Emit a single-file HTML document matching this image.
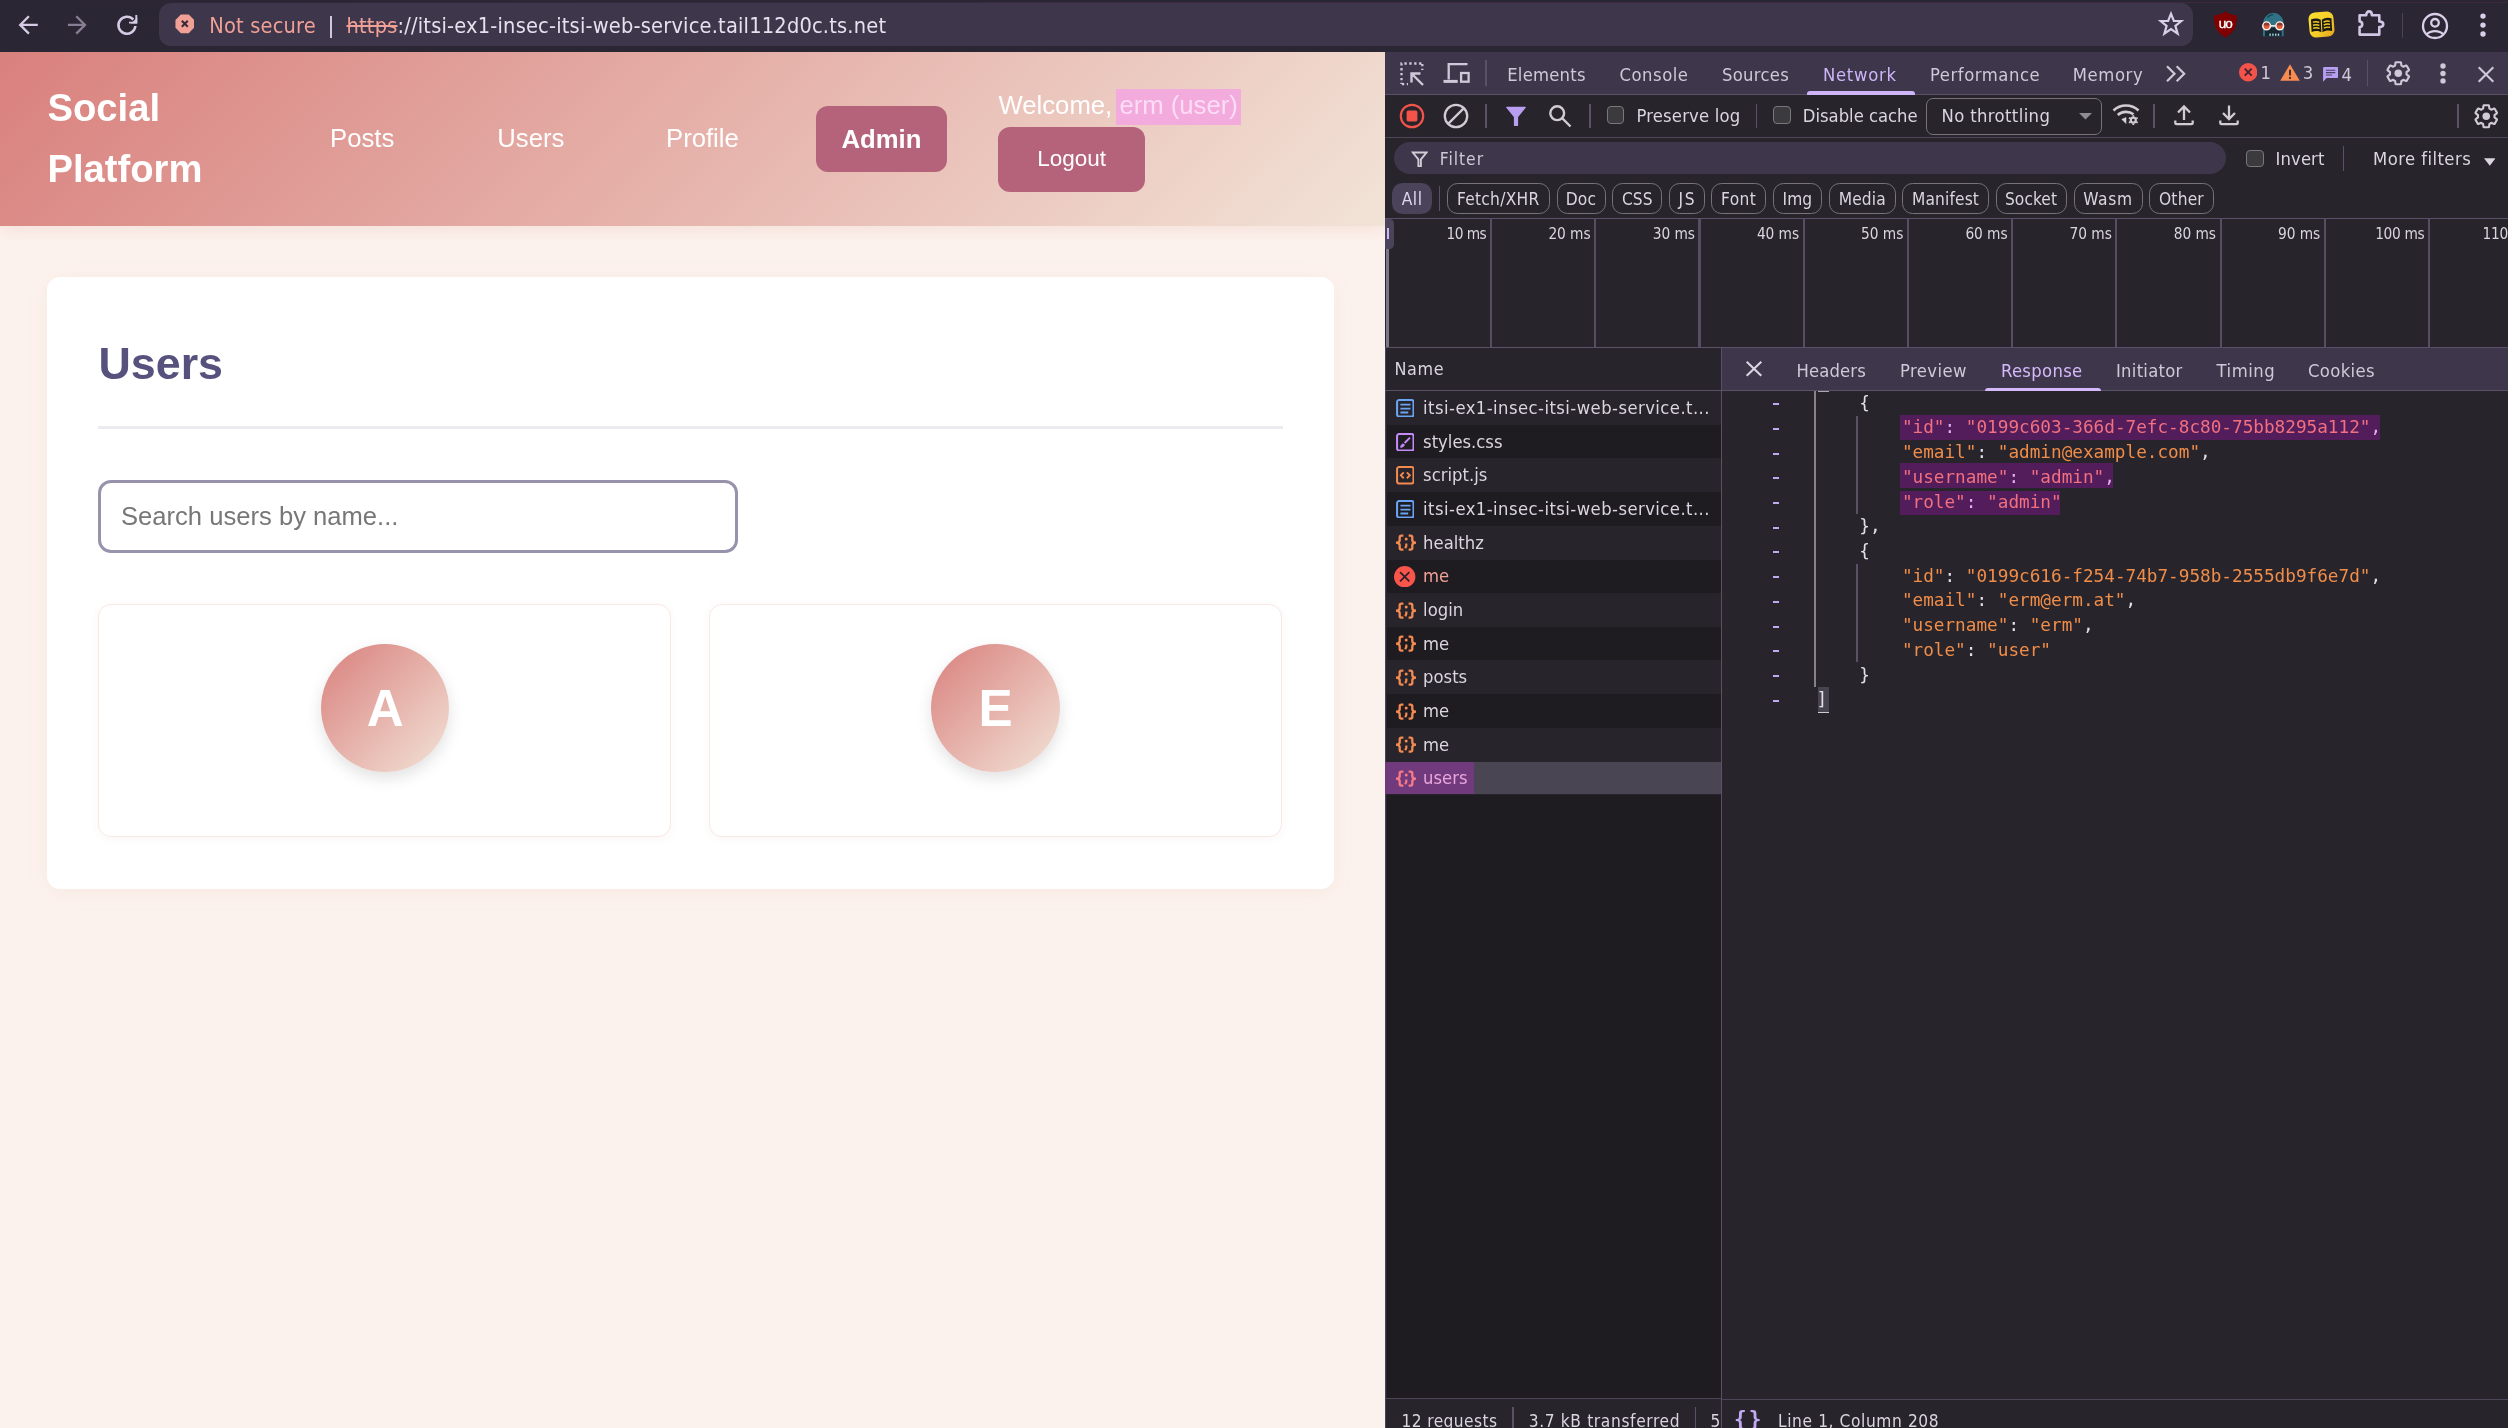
<!DOCTYPE html>
<html lang="en"><head>
<meta charset="utf-8">
<title>Social Platform</title>
<style>
*{box-sizing:border-box;margin:0;padding:0}
html,body{width:2508px;height:1428px;overflow:hidden;background:#27242b}
body{position:relative;font-family:"Liberation Sans",sans-serif}
.abs{position:absolute}
.ui{font-family:"DejaVu Sans Condensed","DejaVu Sans","Liberation Sans",sans-serif}
.mono{font-family:"DejaVu Sans Mono","Liberation Mono",monospace}

/* ---------- browser chrome ---------- */
#chrome{position:absolute;left:0;top:0;width:2508px;height:52px;background:#2b2634}
#omni{position:absolute;left:159px;top:3px;width:2034px;height:43px;background:#3e364b;border-radius:12px}
#chrome .t{position:absolute;white-space:nowrap;font-size:21.6px;line-height:26px;top:13px}

/* ---------- page ---------- */
#page{position:absolute;left:0;top:52px;width:1385px;height:1376px;background:#fcf2ed;overflow:hidden}
#hdr{position:absolute;left:0;top:0;width:1385px;height:174px;background:linear-gradient(135deg,#d9807d 0%,#f2e3d7 100%);box-shadow:0 3px 16px rgba(205,120,105,.17)}
#logo{position:absolute;left:47.5px;top:25px;font-weight:bold;font-size:38.2px;line-height:61px;color:#fff;width:200px}
.nl{position:absolute;top:66px;font-size:25.7px;line-height:40.5px;color:#fff;white-space:nowrap}
.btn{position:absolute;background:#b5637b;border-radius:10px;color:#fff;text-align:center;white-space:nowrap}
#card{position:absolute;left:47px;top:225px;width:1287px;height:612px;background:#fff;border-radius:13px;box-shadow:0 3px 24px rgba(170,90,60,.06)}
#h1{position:absolute;left:51.5px;top:50.5px;font-size:44.8px;line-height:71px;font-weight:bold;color:#57517e}
#hr{position:absolute;left:51px;top:149.3px;width:1185px;height:3px;background:#ececf0}
#search{position:absolute;left:51px;top:203.2px;width:640px;height:72.8px;border:3px solid #9892ab;border-radius:13px;background:#fff}
#search span{position:absolute;left:20px;top:14px;font-size:25.6px;line-height:38px;color:#777;white-space:nowrap}
.uc{position:absolute;top:327px;width:573px;height:233px;border:1.6px solid #f9e9e3;border-radius:13px;background:#fff;box-shadow:0 2px 8px rgba(160,80,60,.05)}
.av{position:absolute;left:221.7px;top:38.7px;width:128.4px;height:128.4px;border-radius:50%;background:linear-gradient(135deg,#d9807d 0%,#f2e3d7 100%);box-shadow:0 6px 16px rgba(0,0,0,.12);color:#fff;font-weight:bold;font-size:51.2px;line-height:130px;text-align:center}

/* ---------- devtools ---------- */
#dt{position:absolute;left:1385px;top:52px;width:1123px;height:1376px;background:#27242b;color:#e3dfe8;font-size:19px;overflow:hidden}
#dt .lb{position:absolute;white-space:nowrap;line-height:24px}
.code{font-size:17.700px;line-height:24.73px;white-space:pre;letter-spacing:0}
#chrome,#page,#dt{will-change:transform}
</style>
</head>
<body>
<div id="chrome">
  <div class="abs" style="left:0;top:2px;width:2508px;height:1px;background:linear-gradient(90deg,rgba(90,50,90,0) 0%,rgba(100,50,95,.3) 45%,rgba(100,50,95,.3) 100%)"></div>
  <svg class="abs" style="left:16px;top:13px" width="24" height="24" viewBox="0 0 24 24" fill="none" stroke="#d5cbe5" stroke-width="2.300" stroke-linejoin="miter"><path d="M21.800 11.900H4.700M12.900 3.200L4.200 11.900L12.900 20.600"></path></svg>
  <svg class="abs" style="left:65px;top:13px" width="24" height="24" viewBox="0 0 24 24" fill="none" stroke="#887e94" stroke-width="2.300" stroke-linejoin="miter"><path d="M2.900 11.900H19.500M11.300 3.200L20 11.900L11.300 20.600"></path></svg>
  <svg class="abs" style="left:115px;top:13px" width="24" height="24" viewBox="0 0 24 24" fill="none" stroke="#d5cbe5"><path d="M20.400 13A8.500 8.500 0 1 1 18.300 6.600" stroke-width="2.500"></path><path d="M21.300 2V9.600H14" stroke-width="1.900"></path><path d="M22.250 4.500V10.550H16Z" fill="#d5cbe5" stroke="none"></path></svg>
  <div id="omni"></div>
  <svg class="abs" style="left:174.600px;top:14.400px" width="19.600" height="19.600" viewBox="0 0 21 21"><path d="M6.300 0.500H14.700L20.500 6.300V14.700L14.700 20.500H6.300L0.500 14.700V6.300Z" fill="#f1a096"></path><path d="M7.300 7.300L13.700 13.700M13.700 7.300L7.300 13.700" stroke="#3a2a36" stroke-width="2.200"></path></svg>
  <div class="t ui" style="left: 209.3px; color: rgb(241, 160, 150); letter-spacing: 0.19px;">Not secure</div>
  <div class="abs" style="left:330px;top:16px;width:2px;height:22px;background:#cfc8da"></div>
  <div class="t ui" style="left: 346.5px; color: rgb(231, 225, 238); letter-spacing: 0.2px;"><span style="color:#f1a096;text-decoration:line-through;text-decoration-thickness:1.5px">https</span>://itsi-ex1-insec-itsi-web-service.tail112d0c.ts.net</div>
  <svg class="abs" style="left:2158px;top:11px" width="26" height="26" viewBox="0 0 26 26" fill="none" stroke="#d9cfe8" stroke-width="2.2" stroke-linejoin="miter"><path d="M13 2.8L15.9 10H23.4L17.4 14.8L19.6 22.6L13 18L6.4 22.6L8.6 14.8L2.6 10H10.1Z"></path></svg>
  <!-- uBlock -->
  <svg class="abs" style="left:2213px;top:11px" width="25" height="27" viewBox="0 0 25 27"><path d="M12.4 0.6C9.5 3 5 4.3 1 4.6C0.800 14 2.500 21 12.400 26.500C22.300 21 24 14 23.800 4.600C19.800 4.300 15.300 3 12.400 0.600Z" fill="#800000"></path><text x="12.300" y="17.100" font-family="Liberation Sans,sans-serif" font-size="13.500" fill="#fff" stroke="#fff" stroke-width="0.350" text-anchor="middle" letter-spacing="-0.900">uo</text></svg>
  <!-- goggles -->
  <svg class="abs" style="left:2260px;top:12px" width="26" height="25" viewBox="0 0 26 25"><path d="M3 24.300V11.200A10.350 10.350 0 0 1 23.700 11.200V24.300Z" fill="#2f7285"></path><path d="M7.500 5.500C9 3.500 11 2.600 13 2.500" stroke="#1d4654" stroke-width="1.400" fill="none"></path><rect x="5" y="15.500" width="16.700" height="8.800" fill="#172630"></rect><rect x="9.400" y="21.600" width="1.400" height="2.200" fill="#a8dbe6"></rect><rect x="12.200" y="21.600" width="1.400" height="2.200" fill="#a8dbe6"></rect><rect x="15" y="21.600" width="1.400" height="2.200" fill="#a8dbe6"></rect><rect x="17.800" y="21.600" width="1.400" height="2.200" fill="#a8dbe6"></rect><circle cx="6.600" cy="13.900" r="3.800" fill="#e2593c" stroke="#fdf1ea" stroke-width="1.600"></circle><circle cx="19.700" cy="13.900" r="3.800" fill="#e2593c" stroke="#fdf1ea" stroke-width="1.600"></circle><path d="M3.600 13.400A3 3 0 0 1 9.600 13.400Z" fill="#8a3a30"></path><path d="M16.700 13.400A3 3 0 0 1 22.700 13.400Z" fill="#8a3a30"></path><rect x="10.800" y="13.100" width="4.700" height="1.500" fill="#fdf1ea"></rect></svg>
  <!-- book -->
  <svg class="abs" style="left:2308px;top:11px" width="27" height="27" viewBox="0 0 27 27"><defs><linearGradient id="bk" x1="0" y1="0" x2="1" y2="1"><stop offset="0" stop-color="#f9e034"></stop><stop offset="0.600" stop-color="#f4cc28"></stop><stop offset="1" stop-color="#e3a01a"></stop></linearGradient></defs><rect x="1" y="1" width="25" height="25" rx="6.500" fill="url(#bk)" transform="rotate(-5 13.500 13.500)"></rect><g transform="rotate(-3 13.500 13.500) translate(13.500 14) scale(1.080) translate(-13.500 -14)"><path d="M4 8.300C7 7.100 10.500 7.400 13 9.200V20.800C10.500 19.100 7 18.900 4 20Z" fill="#1c1a14"></path><path d="M23 8.300C20 7.100 16.500 7.400 14 9.200V20.800C16.500 19.100 20 18.900 23 20Z" fill="#1c1a14"></path><path d="M5.600 11C7.600 10.400 9.700 10.600 11.500 11.500M5.600 13.800C7.600 13.200 9.700 13.400 11.500 14.300M5.600 16.600C7.600 16 9.700 16.200 11.500 17.100M21.400 11C19.400 10.400 17.300 10.600 15.500 11.500M21.400 13.800C19.400 13.200 17.300 13.400 15.500 14.300M21.400 16.600C19.400 16 17.300 16.200 15.500 17.100" stroke="#f4cc28" stroke-width="1.300" fill="none"></path></g></svg>
  <!-- puzzle -->
  <svg class="abs" style="left:2356px;top:9px" width="30" height="29" viewBox="0 0 30 29" fill="none" stroke="#d1c6e3" stroke-width="2.600" stroke-linejoin="round"><path d="M3.600 6.300H10.200C10.200 1 15.900 1 15.900 6.300H23.300V12.500C28.600 12.500 28.600 18.100 23.300 18.100V25.600H3.600V18.100C7.100 18.100 7.100 12.500 3.600 12.500Z"></path></svg>
  <div class="abs" style="left:2402px;top:13px;width:1px;height:25px;background:#4b4259"></div>
  <!-- profile -->
  <svg class="abs" style="left:2421px;top:12px" width="28" height="28" viewBox="0 0 28 28" fill="none" stroke="#d9cfe8" stroke-width="2.3"><circle cx="14" cy="14" r="12"></circle><circle cx="14" cy="10.800" r="3.800"></circle><path d="M5.800 22.300C9.800 18.100 18.200 18.100 22.200 22.300"></path></svg>
  <svg class="abs" style="left:2479px;top:12px" width="8" height="26" viewBox="0 0 8 26" fill="#d9cfe8"><circle cx="4" cy="4.100" r="2.700"></circle><circle cx="4" cy="13.100" r="2.700"></circle><circle cx="4" cy="22" r="2.700"></circle></svg>
</div>
<div id="page">
  <div id="hdr">
    <div id="logo"><span style="position:absolute;left:0;top:0">Social</span> <span style="position:absolute;left:0;top:61px">Platform</span></div>
    <div class="nl" style="left:330px">Posts</div>
    <div class="nl" style="left:497.3px">Users</div>
    <div class="nl" style="left:666px">Profile</div>
    <div class="btn" style="left:816px;top:54px;width:131px;height:66px;font-size:25.7px;line-height:66px;font-weight:bold;border-radius:12px">Admin</div>
    <div class="abs" style="left:1116px;top:37.2px;width:124.8px;height:35.6px;background:#f2abdc"></div>
    <div class="nl" style="left:998.5px;top:33px">Welcome, <span style="color:#fcdcf6">erm (user)</span></div>
    <div class="btn" style="left:998px;top:75.4px;width:147.2px;height:64.7px;font-size:22.5px;line-height:63.5px;border-radius:12px">Logout</div>
  </div>
  <div id="card">
    <div id="h1">Users</div>
    <div id="hr"></div>
    <div id="search"><span>Search users by name...</span></div>
    <div class="uc" style="left:51.4px"><div class="av">A</div></div>
    <div class="uc" style="left:661.6px"><div class="av">E</div></div>
  </div>
</div>
<div id="dt" class="ui">
<div class="abs" style="left:0px;top:0px;width:1123px;height:42.3px;background:#3e364b;"></div>
<div class="abs" style="left:0px;top:42.2px;width:1123px;height:1.2px;background:#5a5168;"></div>
<svg class="abs" style="left:14px;top:8.5px" width="26" height="26" viewBox="0 0 26 26" fill="none" stroke="#cfc8d7"><path d="M2.5 23V2.5H23.5" stroke-width="2.3" stroke-dasharray="2.3 2.6" stroke-dashoffset="1.1"></path><path d="M2.5 23.2H9" stroke-width="2.3" stroke-dasharray="2.3 2.6" stroke-dashoffset="-0.4"></path><path d="M23.3 2.5V9" stroke-width="2.3" stroke-dasharray="2.3 2.6" stroke-dashoffset="-0.4"></path><path d="M24 24L12.5 12.5M12.5 21.5V12.5H21.5" stroke-width="2.4"></path></svg>
<svg class="abs" style="left:57.5px;top:10px" width="29" height="22" viewBox="0 0 29 22" fill="none" stroke="#cfc8d7" stroke-width="2.3"><path d="M5.7 17.5V2.2H24.5"></path><path d="M0.5 19.4H14.7" stroke-width="3"></path><rect x="18.1" y="11" width="7.5" height="8.7"></rect></svg>
<div class="abs" style="left:99.85px;top:8.3px;width:1.7px;height:25.9px;background:#5a5168;"></div>
<div class="lb" style="left: 122.2px; top: 10.6px; color: rgb(207, 200, 215); font-size: 18.3px; letter-spacing: 0.24px;">Elements</div>
<div class="lb" style="left: 234.4px; top: 10.6px; color: rgb(207, 200, 215); font-size: 18.3px; letter-spacing: 0.55px;">Console</div>
<div class="lb" style="left: 337px; top: 10.6px; color: rgb(207, 200, 215); font-size: 18.3px; letter-spacing: 0.3px;">Sources</div>
<div class="lb" style="left: 438px; top: 10.6px; color: rgb(205, 181, 247); font-size: 18.3px; letter-spacing: 0.71px;">Network</div>
<div class="lb" style="left: 545px; top: 10.6px; color: rgb(207, 200, 215); font-size: 18.3px; letter-spacing: 0.56px;">Performance</div>
<div class="lb" style="left: 687.7px; top: 10.6px; color: rgb(207, 200, 215); font-size: 18.3px; letter-spacing: 0.62px;">Memory</div>
<div class="abs" style="left:421.5px;top:39px;width:108px;height:3.6px;background:#cdb5f7;border-radius:3px 3px 0 0"></div>
<svg class="abs" style="left:780px;top:12px" width="22" height="19" viewBox="0 0 22 19" fill="none" stroke="#cfc8d7" stroke-width="2.2"><path d="M2 2.2L9.5 9.7L2 17.2M11.7 2.2L19.2 9.7L11.7 17.2"></path></svg>
<svg class="abs" style="left:854px;top:11.2px" width="18.4" height="18.4" viewBox="0 0 18 18"><circle cx="9" cy="9" r="9" fill="#f4534a"></circle><path d="M5.6 5.6L12.4 12.4M12.4 5.6L5.6 12.4" stroke="#3c2233" stroke-width="1.7"></path></svg>
<div class="lb" style="left:875.4px;top:8.5px;color:#cfc8d7;font-size:18.3px;">1</div>
<svg class="abs" style="left:894.7px;top:11.5px" width="20" height="17" viewBox="0 0 20 17"><path d="M10 0.3L19.8 16.8H0.2Z" fill="#f88b50"></path><path d="M10 5.8V11.4" stroke="#3e2c33" stroke-width="1.9"></path><circle cx="10" cy="13.9" r="1.15" fill="#3e2c33"></circle></svg>
<div class="lb" style="left:917.8px;top:8.5px;color:#cfc8d7;font-size:18.3px;">3</div>
<svg class="abs" style="left:938px;top:14.7px" width="15.2" height="15" viewBox="0 0 15 15"><path d="M1.2 0H13.8Q15 0 15 1.2V9.8Q15 11 13.8 11H3.5L0 14.7V1.2Q0 0 1.2 0Z" fill="#b99ff2"></path><path d="M2.8 3.2H12.2M2.8 5.6H12.2M2.8 8H9" stroke="#4a3f63" stroke-width="1.1"></path></svg>
<div class="lb" style="left:956.4px;top:11.1px;color:#cfc8d7;font-size:18.3px;">4</div>
<div class="abs" style="left:981.75px;top:8.1px;width:1.7px;height:25.7px;background:#5a5168;"></div>
<svg class="abs" style="left:999.75px;top:7.85px" width="26.5" height="26.5" viewBox="0 0 24 24"><path d="M19.43 12.98c.040-.320.07-.640.07-.980s-.030-.660-.070-.980l2.11-1.65c.190-.150.24-.420.12-.640l-2-3.46c-.120-.220-.390-.300-.610-.220l-2.49 1c-.520-.400-1.08-.730-1.69-.980l-.380-2.65C14.46 2.18 14.25 2 14 2h-4c-.250 0-.460.18-.490.42l-.380 2.65c-.610.25-1.17.590-1.69.980l-2.49-1c-.230-.090-.490 0-.610.22l-2 3.46c-.130.22-.070.49.120.64l2.11 1.65c-.040.32-.070.65-.070.98s.030.66.070.98l-2.11 1.65c-.190.15-.240.42-.120.64l2 3.46c.120.22.390.3.610.22l2.49-1c.520.4 1.08.730 1.69.980l.380 2.65c.030.24.240.42.490.42h4c.250 0 .460-.180.49-.420l.380-2.65c.610-.250 1.17-.590 1.69-.980l2.49 1c.230.09.490 0 .610-.220l2-3.46c.120-.220.07-.490-.120-.640l-2.11-1.65z" fill="none" stroke="#cfc8d7" stroke-width="1.9" stroke-linejoin="round"></path><circle cx="12" cy="12" r="3.4" fill="#cfc8d7"></circle></svg>
<svg class="abs" style="left:1054.8px;top:10.7px" width="6" height="21" viewBox="0 0 6 21" fill="#cfc8d7"><circle cx="3" cy="3" r="2.7"></circle><circle cx="3" cy="10.5" r="2.7"></circle><circle cx="3" cy="17.9" r="2.7"></circle></svg>
<svg class="abs" style="left:1092px;top:13.5px" width="18" height="17" viewBox="0 0 18 17" fill="none" stroke="#cfc8d7" stroke-width="2.1"><path d="M1.7 1.2L16.3 15.8M16.3 1.2L1.7 15.8"></path></svg>
<div class="abs" style="left:0px;top:84.5px;width:1123px;height:1.2px;background:#4d4659;"></div>
<svg class="abs" style="left:14px;top:51.2px" width="26" height="26" viewBox="0 0 26 26"><circle cx="13" cy="13" r="11.2" fill="none" stroke="#f4534a" stroke-width="2.2"></circle><rect x="7.6" y="7.6" width="10.8" height="10.8" rx="1.6" fill="#f4534a"></rect></svg>
<svg class="abs" style="left:58px;top:51.2px" width="26" height="26" viewBox="0 0 26 26" fill="none" stroke="#d0cbd5" stroke-width="2.3"><circle cx="13" cy="13" r="11.2"></circle><path d="M20.9 5.1L5.1 20.9"></path></svg>
<div class="abs" style="left:100.15px;top:51.8px;width:1.7px;height:24.7px;background:#5a5168;"></div>
<svg class="abs" style="left:120px;top:54px" width="22" height="21" viewBox="0 0 22 21"><path d="M1.8 1.3H20.2L12.5 10.8V19.3H9.5V10.8Z" fill="#b99ff2" stroke="#b99ff2" stroke-width="1.2" stroke-linejoin="round"></path></svg>
<svg class="abs" style="left:163px;top:52.2px" width="24" height="24" viewBox="0 0 24 24" fill="none" stroke="#d0cbd5" stroke-width="2.4"><circle cx="9.2" cy="9.2" r="6.9"></circle><path d="M14 14L22.5 22.5"></path></svg>
<div class="abs" style="left:203.95px;top:51.8px;width:1.7px;height:24.7px;background:#5a5168;"></div>
<div class="abs" style="left:221.8px;top:54.2px;width:17.6px;height:17.6px;border:1.7px solid #7a767e;border-radius:4px;background:#3b3a3d"></div>
<div class="lb" style="left: 251.5px; top: 51.5px; color: rgb(218, 213, 224); font-size: 18.3px; letter-spacing: 0.18px;">Preserve log</div>
<div class="abs" style="left:370.75px;top:51.8px;width:1.7px;height:24.7px;background:#5a5168;"></div>
<div class="abs" style="left:388px;top:54.2px;width:17.6px;height:17.6px;border:1.7px solid #7a767e;border-radius:4px;background:#3b3a3d"></div>
<div class="lb" style="left: 417.8px; top: 51.5px; color: rgb(218, 213, 224); font-size: 18.3px; letter-spacing: -0.01px;">Disable cache</div>
<div class="abs" style="left:541px;top:45.5px;width:175.8px;height:37.4px;border:1.4px solid #77727d;border-radius:7px"></div>
<div class="lb" style="left: 556.5px; top: 51.5px; color: rgb(218, 213, 224); font-size: 18.3px; letter-spacing: 0.38px;">No throttling</div>
<svg class="abs" style="left:693.5px;top:61.3px" width="13" height="6.5" viewBox="0 0 13 6.5"><path d="M0 0H13L6.5 6.5Z" fill="#908c93"></path></svg>
<svg class="abs" style="left:726.5px;top:50.2px" width="28" height="24" viewBox="0 0 28 24" fill="none" stroke="#d0cbd5" stroke-width="2.6"><path d="M1.5 8.5C8.5 1.8 19.5 1.8 26.5 8.5"></path><path d="M5.8 13C10 9 17 8.8 21.5 12.3"></path><path d="M9.8 17.3L14 21.5V15.5Z" fill="#dad5e0" stroke-width="0.6"></path><circle cx="21.3" cy="18.2" r="2.5" stroke-width="2.2"></circle><path d="M21.3 13.3V14.8M21.3 21.6V23.1M17 15.7L18.3 16.5M24.3 19.9L25.6 20.7M17 20.7L18.3 19.9M24.3 16.5L25.6 15.7" stroke-width="1.9"></path></svg>
<div class="abs" style="left:768.15px;top:51.8px;width:1.7px;height:24.7px;background:#5a5168;"></div>
<svg class="abs" style="left:788px;top:52px" width="22" height="22" viewBox="0 0 22 22" fill="none" stroke="#d0cbd5" stroke-width="2.3"><path d="M11 16V2.8M5 8.5L11 2.5L17 8.5"></path><path d="M2.3 16.5V19Q2.3 20.2 3.5 20.2H18.5Q19.7 20.2 19.7 19V16.5"></path></svg>
<svg class="abs" style="left:833px;top:52px" width="22" height="22" viewBox="0 0 22 22" fill="none" stroke="#d0cbd5" stroke-width="2.3"><path d="M11 1.5V14.5M5 9L11 15L17 9"></path><path d="M2.3 16.5V19Q2.3 20.2 3.5 20.2H18.5Q19.7 20.2 19.7 19V16.5"></path></svg>
<div class="abs" style="left:1072.15px;top:51.8px;width:1.7px;height:24.7px;background:#5a5168;"></div>
<svg class="abs" style="left:1087.75px;top:50.85px" width="26.5" height="26.5" viewBox="0 0 24 24"><path d="M19.43 12.98c.040-.320.07-.640.07-.980s-.030-.660-.070-.980l2.11-1.65c.190-.150.24-.420.12-.640l-2-3.46c-.120-.220-.390-.300-.610-.220l-2.49 1c-.520-.400-1.08-.730-1.69-.980l-.380-2.65C14.46 2.18 14.25 2 14 2h-4c-.250 0-.460.18-.490.42l-.380 2.65c-.610.25-1.17.590-1.69.980l-2.49-1c-.230-.090-.490 0-.610.22l-2 3.46c-.130.22-.070.49.120.64l2.11 1.65c-.040.32-.070.65-.070.98s.030.66.070.98l-2.11 1.65c-.190.15-.240.42-.120.64l2 3.46c.120.22.390.3.610.22l2.49-1c.520.4 1.08.730 1.69.980l.380 2.65c.030.24.240.42.490.42h4c.250 0 .460-.180.49-.420l.380-2.65c.610-.250 1.17-.590 1.69-.980l2.49 1c.230.09.490 0 .610-.220l2-3.46c.120-.220.07-.490-.120-.640l-2.11-1.65z" fill="none" stroke="#d0cbd5" stroke-width="1.9" stroke-linejoin="round"></path><circle cx="12" cy="12" r="3.4" fill="#d0cbd5"></circle></svg>
<div class="abs" style="left:9px;top:89.9px;width:832px;height:32px;background:#3e364b;border-radius:16px"></div>
<svg class="abs" style="left:25.7px;top:98.7px" width="17.3" height="16" viewBox="0 0 17.3 16" fill="none" stroke="#d0cbd5" stroke-width="1.9"><path d="M1.8 1.5H15.5L9.9 8.3V15.5H7.4V8.3Z" stroke-linejoin="miter"></path></svg>
<div class="lb" style="left: 54.8px; top: 95.2px; color: rgb(207, 200, 215); font-size: 17.3px; letter-spacing: 0.97px;">Filter</div>
<div class="abs" style="left:861.4px;top:97.7px;width:17.6px;height:17.6px;border:1.7px solid #7a767e;border-radius:4px;background:#3b3a3d"></div>
<div class="lb" style="left: 890.6px; top: 94.5px; color: rgb(218, 213, 224); font-size: 18.3px; letter-spacing: 0.1px;">Invert</div>
<div class="abs" style="left:957.55px;top:94.4px;width:1.5px;height:24.6px;background:#5a5168;"></div>
<div class="lb" style="left: 988px; top: 94.5px; color: rgb(218, 213, 224); font-size: 18.3px; letter-spacing: 0.45px;">More filters</div>
<svg class="abs" style="left:1098.7px;top:105.6px" width="11.6" height="8" viewBox="0 0 12 8"><path d="M0 0H12L6 8Z" fill="#dad5e0"></path></svg>
<div class="abs" style="left:6.9px;top:131.2px;width:39.9px;height:30.8px;background:#4b4359;border-radius:10.5px"></div>
<div class="lb" style="left: 16.8px; top: 135.2px; color: rgb(224, 212, 240); font-size: 17.2px; letter-spacing: 0.49px;">All</div>
<div class="abs" style="left:61.8px;top:131.2px;width:103.2px;height:30.8px;border-radius:10.5px;border:1.3px solid #77727d"></div>
<div class="lb" style="left: 72px; top: 135.2px; color: rgb(218, 213, 224); font-size: 17.2px; letter-spacing: 0.27px;">Fetch/XHR</div>
<div class="abs" style="left:171.5px;top:131.2px;width:49px;height:30.8px;border-radius:10.5px;border:1.3px solid #77727d"></div>
<div class="lb" style="left: 180.8px; top: 135.2px; color: rgb(218, 213, 224); font-size: 17.2px; letter-spacing: 0.13px;">Doc</div>
<div class="abs" style="left:227px;top:131.2px;width:49.5px;height:30.8px;border-radius:10.5px;border:1.3px solid #77727d"></div>
<div class="lb" style="left: 237px; top: 135.2px; color: rgb(218, 213, 224); font-size: 17.2px; letter-spacing: 0.06px;">CSS</div>
<div class="abs" style="left:284px;top:131.2px;width:36px;height:30.8px;border-radius:10.5px;border:1.3px solid #77727d"></div>
<div class="lb" style="left: 293.5px; top: 135.2px; color: rgb(218, 213, 224); font-size: 17.2px; letter-spacing: 1.74px;">JS</div>
<div class="abs" style="left:326px;top:131.2px;width:54.5px;height:30.8px;border-radius:10.5px;border:1.3px solid #77727d"></div>
<div class="lb" style="left: 336px; top: 135.2px; color: rgb(218, 213, 224); font-size: 17.2px; letter-spacing: 0.4px;">Font</div>
<div class="abs" style="left:388px;top:131.2px;width:48.5px;height:30.8px;border-radius:10.5px;border:1.3px solid #77727d"></div>
<div class="lb" style="left: 397.6px; top: 135.2px; color: rgb(218, 213, 224); font-size: 17.2px; letter-spacing: -0.02px;">Img</div>
<div class="abs" style="left:444px;top:131.2px;width:66.5px;height:30.8px;border-radius:10.5px;border:1.3px solid #77727d"></div>
<div class="lb" style="left: 453.7px; top: 135.2px; color: rgb(218, 213, 224); font-size: 17.2px; letter-spacing: 0.14px;">Media</div>
<div class="abs" style="left:517px;top:131.2px;width:86.5px;height:30.8px;border-radius:10.5px;border:1.3px solid #77727d"></div>
<div class="lb" style="left: 527px; top: 135.2px; color: rgb(218, 213, 224); font-size: 17.2px; letter-spacing: 0.13px;">Manifest</div>
<div class="abs" style="left:611px;top:131.2px;width:70.5px;height:30.8px;border-radius:10.5px;border:1.3px solid #77727d"></div>
<div class="lb" style="left: 620px; top: 135.2px; color: rgb(218, 213, 224); font-size: 17.2px; letter-spacing: 0.05px;">Socket</div>
<div class="abs" style="left:689px;top:131.2px;width:68.5px;height:30.8px;border-radius:10.5px;border:1.3px solid #77727d"></div>
<div class="lb" style="left: 698.2px; top: 135.2px; color: rgb(218, 213, 224); font-size: 17.2px; letter-spacing: 0.72px;">Wasm</div>
<div class="abs" style="left:764px;top:131.2px;width:64.5px;height:30.8px;border-radius:10.5px;border:1.3px solid #77727d"></div>
<div class="lb" style="left: 774px; top: 135.2px; color: rgb(218, 213, 224); font-size: 17.2px; letter-spacing: 0.2px;">Other</div>
<div class="abs" style="left:53.55px;top:134.3px;width:1.7px;height:24.5px;background:#5a5168;"></div>
<div class="abs" style="left:0px;top:165.9px;width:1123px;height:1.3px;background:#5a5168;"></div>
<div class="abs" style="left:0px;top:295px;width:1123px;height:1.2px;background:#5a5168;"></div>
<div class="abs" style="left:104.9px;top:167px;width:2.2px;height:128px;background:#554d62;"></div>
<div class="lb" style="left: 61.5px; top: 170px; color: rgb(218, 213, 224); font-size: 15.3px; letter-spacing: -0.57px;">10 ms</div>
<div class="abs" style="left:209.1px;top:167px;width:2.2px;height:128px;background:#554d62;"></div>
<div class="lb" style="left: 163.4px; top: 170px; color: rgb(218, 213, 224); font-size: 15.3px; letter-spacing: -0.06px;">20 ms</div>
<div class="abs" style="left:313.4px;top:167px;width:2.2px;height:128px;background:#554d62;"></div>
<div class="lb" style="left: 267.7px; top: 170px; color: rgb(218, 213, 224); font-size: 15.3px; letter-spacing: -0.06px;">30 ms</div>
<div class="abs" style="left:417.6px;top:167px;width:2.2px;height:128px;background:#554d62;"></div>
<div class="lb" style="left: 371.9px; top: 170px; color: rgb(218, 213, 224); font-size: 15.3px; letter-spacing: -0.06px;">40 ms</div>
<div class="abs" style="left:521.8px;top:167px;width:2.2px;height:128px;background:#554d62;"></div>
<div class="lb" style="left: 476.1px; top: 170px; color: rgb(218, 213, 224); font-size: 15.3px; letter-spacing: -0.06px;">50 ms</div>
<div class="abs" style="left:626.1px;top:167px;width:2.2px;height:128px;background:#554d62;"></div>
<div class="lb" style="left: 580.4px; top: 170px; color: rgb(218, 213, 224); font-size: 15.3px; letter-spacing: -0.06px;">60 ms</div>
<div class="abs" style="left:730.3px;top:167px;width:2.2px;height:128px;background:#554d62;"></div>
<div class="lb" style="left: 684.6px; top: 170px; color: rgb(218, 213, 224); font-size: 15.3px; letter-spacing: -0.06px;">70 ms</div>
<div class="abs" style="left:834.5px;top:167px;width:2.2px;height:128px;background:#554d62;"></div>
<div class="lb" style="left: 788.8px; top: 170px; color: rgb(218, 213, 224); font-size: 15.3px; letter-spacing: -0.06px;">80 ms</div>
<div class="abs" style="left:938.7px;top:167px;width:2.2px;height:128px;background:#554d62;"></div>
<div class="lb" style="left: 893px; top: 170px; color: rgb(218, 213, 224); font-size: 15.3px; letter-spacing: -0.06px;">90 ms</div>
<div class="abs" style="left:1043px;top:167px;width:2.2px;height:128px;background:#554d62;"></div>
<div class="lb" style="left: 990.2px; top: 170px; color: rgb(218, 213, 224); font-size: 15.3px; letter-spacing: -0.35px;">100 ms</div>
<div class="lb" style="left:1097.5px;top:170px;color:#dad5e0;font-size:15.3px;letter-spacing:-0.3px">110</div>
<div class="abs" style="left:0.4px;top:167.2px;width:8.5px;height:29.7px;background:#4a4359;border-radius:0 4.5px 4.5px 0"></div>
<div class="abs" style="left:1.9px;top:176.1px;width:2.2px;height:11px;background:#cdb5f7;"></div>
<div class="abs" style="left:0.8px;top:196.9px;width:3px;height:98.2px;background:#7d7689;"></div>
<div class="abs" style="left:0px;top:295px;width:1.2px;height:1081px;background:#4a4458;"></div>
<div class="lb" style="left: 9.4px; top: 304.7px; color: rgb(218, 213, 224); font-size: 17.8px; letter-spacing: 0.63px;">Name</div>
<div class="abs" style="left:0px;top:338px;width:337px;height:1.2px;background:#5a5168;"></div>
<div class="abs" style="left:1.8px;top:339.1px;width:334px;height:33.67px;background:#27242b;"></div>
<svg class="abs" style="left:10.7px;top:346.8px" width="18.6" height="18.6" viewBox="0 0 19 19" fill="none" stroke="#6aa5f5"><rect x="1.1" y="1.1" width="16.8" height="16.8" rx="2" stroke-width="2.1"></rect><path d="M4.5 5.8H14.8M4.5 9.8H14.8M4.5 13.8H12.5" stroke-width="1.9"></path></svg>
<div class="lb" style="left: 38.1px; top: 343.9px; color: rgb(218, 213, 224); font-size: 18.3px; letter-spacing: 0.44px;">itsi-ex1-insec-itsi-web-service.t...</div>
<div class="abs" style="left:1.8px;top:372.8px;width:334px;height:33.67px;background:#1e1b21;"></div>
<svg class="abs" style="left:10.7px;top:380.5px" width="18.6" height="18.6" viewBox="0 0 19 19" fill="none" stroke="#c58af9"><rect x="1.1" y="1.1" width="16.8" height="16.8" rx="2" stroke-width="2.1"></rect><path d="M14.3 4.7L8.8 10.2" stroke-width="2"></path><path d="M4.6 14.6C5 12.3 6.3 10.7 7.9 11.3C9.5 12.4 7.5 14.8 4.6 14.6Z" fill="#c58af9" stroke-width="0.8"></path></svg>
<div class="lb" style="left:38.1px;top:377.6px;color:#dad5e0;font-size:18.3px;">styles.css</div>
<div class="abs" style="left:1.8px;top:406.4px;width:334px;height:33.67px;background:#27242b;"></div>
<svg class="abs" style="left:10.7px;top:414.1px" width="18.6" height="18.6" viewBox="0 0 19 19" fill="none" stroke="#f58a50"><rect x="1.1" y="1.1" width="16.8" height="16.8" rx="2" stroke-width="2.1"></rect><path d="M7.9 6.5L4.9 9.5L7.9 12.5M11.1 6.5L14.1 9.5L11.1 12.5" stroke-width="1.9"></path></svg>
<div class="lb" style="left:38.1px;top:411.2px;color:#dad5e0;font-size:18.3px;">script.js</div>
<div class="abs" style="left:1.8px;top:440.1px;width:334px;height:33.67px;background:#1e1b21;"></div>
<svg class="abs" style="left:10.7px;top:447.8px" width="18.6" height="18.6" viewBox="0 0 19 19" fill="none" stroke="#6aa5f5"><rect x="1.1" y="1.1" width="16.8" height="16.8" rx="2" stroke-width="2.1"></rect><path d="M4.5 5.8H14.8M4.5 9.8H14.8M4.5 13.8H12.5" stroke-width="1.9"></path></svg>
<div class="lb" style="left: 38.1px; top: 444.9px; color: rgb(218, 213, 224); font-size: 18.3px; letter-spacing: 0.44px;">itsi-ex1-insec-itsi-web-service.t...</div>
<div class="abs" style="left:1.8px;top:473.8px;width:334px;height:33.67px;background:#27242b;"></div>
<svg class="abs" style="left:9.5px;top:482.3px" width="22" height="17" viewBox="0 0 22 17" fill="none" stroke="#f58a50" stroke-width="2.3"><path d="M8.4 1.7H6.5Q4.7 1.7 4.7 3.3V5.9Q4.7 8.6 1 8.6Q4.7 8.6 4.7 11.3V14Q4.7 15.6 6.5 15.6H8.4"></path><path d="M13.6 1.7H15.5Q17.3 1.7 17.3 3.3V5.9Q17.3 8.6 21 8.6Q17.3 8.6 17.3 11.3V14Q17.3 15.6 15.5 15.6H13.6"></path><circle cx="11.2" cy="4.9" r="1.5" fill="#f58a50" stroke="none"></circle><path d="M11.3 9.6V12L10.2 14.2" stroke-width="2.2"></path></svg>
<div class="lb" style="left:38.1px;top:478.6px;color:#dad5e0;font-size:18.3px;">healthz</div>
<div class="abs" style="left:1.8px;top:507.5px;width:334px;height:33.67px;background:#1e1b21;"></div>
<svg class="abs" style="left:9.4px;top:514px" width="21.4" height="21.4" viewBox="0 0 22 22"><circle cx="11" cy="11" r="11" fill="#f9554b"></circle><path d="M6.2 6.2L15.8 15.8M15.8 6.2L6.2 15.8" stroke="#2d1f27" stroke-width="1.8"></path></svg>
<div class="lb" style="left:38.1px;top:512.3px;color:#f1a096;font-size:18.3px;">me</div>
<div class="abs" style="left:1.8px;top:541.1px;width:334px;height:33.67px;background:#27242b;"></div>
<svg class="abs" style="left:9.5px;top:549.6px" width="22" height="17" viewBox="0 0 22 17" fill="none" stroke="#f58a50" stroke-width="2.3"><path d="M8.4 1.7H6.5Q4.7 1.7 4.7 3.3V5.9Q4.7 8.6 1 8.6Q4.7 8.6 4.7 11.3V14Q4.7 15.6 6.5 15.6H8.4"></path><path d="M13.6 1.7H15.5Q17.3 1.7 17.3 3.3V5.9Q17.3 8.6 21 8.6Q17.3 8.6 17.3 11.3V14Q17.3 15.6 15.5 15.6H13.6"></path><circle cx="11.2" cy="4.9" r="1.5" fill="#f58a50" stroke="none"></circle><path d="M11.3 9.6V12L10.2 14.2" stroke-width="2.2"></path></svg>
<div class="lb" style="left:38.1px;top:545.9px;color:#dad5e0;font-size:18.3px;">login</div>
<div class="abs" style="left:1.8px;top:574.8px;width:334px;height:33.67px;background:#1e1b21;"></div>
<svg class="abs" style="left:9.5px;top:583.3px" width="22" height="17" viewBox="0 0 22 17" fill="none" stroke="#f58a50" stroke-width="2.3"><path d="M8.4 1.7H6.5Q4.7 1.7 4.7 3.3V5.9Q4.7 8.6 1 8.6Q4.7 8.6 4.7 11.3V14Q4.7 15.6 6.5 15.6H8.4"></path><path d="M13.6 1.7H15.5Q17.3 1.7 17.3 3.3V5.9Q17.3 8.6 21 8.6Q17.3 8.6 17.3 11.3V14Q17.3 15.6 15.5 15.6H13.6"></path><circle cx="11.2" cy="4.9" r="1.5" fill="#f58a50" stroke="none"></circle><path d="M11.3 9.6V12L10.2 14.2" stroke-width="2.2"></path></svg>
<div class="lb" style="left:38.1px;top:579.6px;color:#dad5e0;font-size:18.3px;">me</div>
<div class="abs" style="left:1.8px;top:608.5px;width:334px;height:33.67px;background:#27242b;"></div>
<svg class="abs" style="left:9.5px;top:617px" width="22" height="17" viewBox="0 0 22 17" fill="none" stroke="#f58a50" stroke-width="2.3"><path d="M8.4 1.7H6.5Q4.7 1.7 4.7 3.3V5.9Q4.7 8.6 1 8.6Q4.7 8.6 4.7 11.3V14Q4.7 15.6 6.5 15.6H8.4"></path><path d="M13.6 1.7H15.5Q17.3 1.7 17.3 3.3V5.9Q17.3 8.6 21 8.6Q17.3 8.6 17.3 11.3V14Q17.3 15.6 15.5 15.6H13.6"></path><circle cx="11.2" cy="4.9" r="1.5" fill="#f58a50" stroke="none"></circle><path d="M11.3 9.6V12L10.2 14.2" stroke-width="2.2"></path></svg>
<div class="lb" style="left:38.1px;top:613.3px;color:#dad5e0;font-size:18.3px;">posts</div>
<div class="abs" style="left:1.8px;top:642.1px;width:334px;height:33.67px;background:#1e1b21;"></div>
<svg class="abs" style="left:9.5px;top:650.6px" width="22" height="17" viewBox="0 0 22 17" fill="none" stroke="#f58a50" stroke-width="2.3"><path d="M8.4 1.7H6.5Q4.7 1.7 4.7 3.3V5.9Q4.7 8.6 1 8.6Q4.7 8.6 4.7 11.3V14Q4.7 15.6 6.5 15.6H8.4"></path><path d="M13.6 1.7H15.5Q17.3 1.7 17.3 3.3V5.9Q17.3 8.6 21 8.6Q17.3 8.6 17.3 11.3V14Q17.3 15.6 15.5 15.6H13.6"></path><circle cx="11.2" cy="4.9" r="1.5" fill="#f58a50" stroke="none"></circle><path d="M11.3 9.6V12L10.2 14.2" stroke-width="2.2"></path></svg>
<div class="lb" style="left:38.1px;top:646.9px;color:#dad5e0;font-size:18.3px;">me</div>
<div class="abs" style="left:1.8px;top:675.8px;width:334px;height:33.67px;background:#27242b;"></div>
<svg class="abs" style="left:9.5px;top:684.3px" width="22" height="17" viewBox="0 0 22 17" fill="none" stroke="#f58a50" stroke-width="2.3"><path d="M8.4 1.7H6.5Q4.7 1.7 4.7 3.3V5.9Q4.7 8.6 1 8.6Q4.7 8.6 4.7 11.3V14Q4.7 15.6 6.5 15.6H8.4"></path><path d="M13.6 1.7H15.5Q17.3 1.7 17.3 3.3V5.9Q17.3 8.6 21 8.6Q17.3 8.6 17.3 11.3V14Q17.3 15.6 15.5 15.6H13.6"></path><circle cx="11.2" cy="4.9" r="1.5" fill="#f58a50" stroke="none"></circle><path d="M11.3 9.6V12L10.2 14.2" stroke-width="2.2"></path></svg>
<div class="lb" style="left:38.1px;top:680.6px;color:#dad5e0;font-size:18.3px;">me</div>
<div class="abs" style="left:1.8px;top:709.5px;width:334px;height:32.17px;background:#4a4552;"></div>
<div class="abs" style="left:0px;top:709.5px;width:89px;height:32.17px;background:#703a7c;"></div>
<svg class="abs" style="left:9.5px;top:718px" width="22" height="17" viewBox="0 0 22 17" fill="none" stroke="#f87a86" stroke-width="2.3"><path d="M8.4 1.7H6.5Q4.7 1.7 4.7 3.3V5.9Q4.7 8.6 1 8.6Q4.7 8.6 4.7 11.3V14Q4.7 15.6 6.5 15.6H8.4"></path><path d="M13.6 1.7H15.5Q17.3 1.7 17.3 3.3V5.9Q17.3 8.6 21 8.6Q17.3 8.6 17.3 11.3V14Q17.3 15.6 15.5 15.6H13.6"></path><circle cx="11.2" cy="4.9" r="1.5" fill="#f87a86" stroke="none"></circle><path d="M11.3 9.6V12L10.2 14.2" stroke-width="2.2"></path></svg>
<div class="lb" style="left:38.1px;top:714.3px;color:#eaa6dc;font-size:18.3px;">users</div>
<div class="abs" style="left:1.8px;top:743.1px;width:334px;height:603.3px;background:#1e1b21;"></div>
<div class="abs" style="left:335.9px;top:295px;width:1.2px;height:1081px;background:#5a5168;"></div>
<div class="abs" style="left:337px;top:295.6px;width:786px;height:42.7px;background:#3e364b;"></div>
<div class="abs" style="left:337px;top:338.3px;width:786px;height:1.1px;background:#5a5168;"></div>
<svg class="abs" style="left:359.9px;top:308.4px" width="18" height="17.5" viewBox="0 0 18 17.5" fill="none" stroke="#dad5e0" stroke-width="2.1"><path d="M1.7 1.7L16.3 15.8M16.3 1.7L1.7 15.8"></path></svg>
<div class="lb" style="left: 411.5px; top: 306.8px; color: rgb(207, 200, 215); font-size: 18.3px; letter-spacing: 0.14px;">Headers</div>
<div class="lb" style="left: 515px; top: 306.8px; color: rgb(207, 200, 215); font-size: 18.3px; letter-spacing: 0.41px;">Preview</div>
<div class="lb" style="left: 616px; top: 306.8px; color: rgb(212, 186, 250); font-size: 18.3px; letter-spacing: 0.32px;">Response</div>
<div class="lb" style="left: 731px; top: 306.8px; color: rgb(207, 200, 215); font-size: 18.3px; letter-spacing: 0.27px;">Initiator</div>
<div class="lb" style="left: 831.6px; top: 306.8px; color: rgb(207, 200, 215); font-size: 18.3px; letter-spacing: 0.52px;">Timing</div>
<div class="lb" style="left: 923px; top: 306.8px; color: rgb(207, 200, 215); font-size: 18.3px; letter-spacing: 0.35px;">Cookies</div>
<div class="abs" style="left:599.5px;top:335.6px;width:116px;height:3.8px;background:#d4bafa;border-radius:3px 3px 0 0"></div>
<div class="abs" style="left:388px;top:351px;width:6.2px;height:2px;background:#c3a9f5;"></div>
<div class="abs mono code" style="left:474.24px;top:338.6px"><span style="color:#e3dfe8">{</span></div>
<div class="abs" style="left:388px;top:375.7px;width:6.2px;height:2px;background:#c3a9f5;"></div>
<div class="abs" style="left:515.2px;top:363.3px;width:479.7px;height:24.4px;background:#521d5a;"></div>
<div class="abs mono code" style="left:516.88px;top:363.33px"><span style="color:#f2707f">"id"</span><span style="color:#dfb0f2">: </span><span style="color:#f2707f">"0199c603-366d-7efc-8c80-75bb8295a112"</span><span style="color:#dfb0f2">,</span></div>
<div class="abs" style="left:388px;top:400.5px;width:6.2px;height:2px;background:#c3a9f5;"></div>
<div class="abs mono code" style="left:516.88px;top:388.06px"><span style="color:#f08d49">"email"</span><span style="color:#e3dfe8">: </span><span style="color:#f08d49">"admin@example.com"</span><span style="color:#e3dfe8">,</span></div>
<div class="abs" style="left:388px;top:425.2px;width:6.2px;height:2px;background:#c3a9f5;"></div>
<div class="abs" style="left:515.2px;top:411.3px;width:213.2px;height:24.4px;background:#521d5a;"></div>
<div class="abs mono code" style="left:516.88px;top:412.79px"><span style="color:#f2707f">"username"</span><span style="color:#dfb0f2">: </span><span style="color:#f2707f">"admin"</span><span style="color:#dfb0f2">,</span></div>
<div class="abs" style="left:388px;top:449.9px;width:6.2px;height:2px;background:#c3a9f5;"></div>
<div class="abs" style="left:515.2px;top:438.5px;width:159.9px;height:24.4px;background:#521d5a;"></div>
<div class="abs mono code" style="left:516.88px;top:437.52px"><span style="color:#f2707f">"role"</span><span style="color:#dfb0f2">: </span><span style="color:#f2707f">"admin"</span></div>
<div class="abs" style="left:388px;top:474.6px;width:6.2px;height:2px;background:#c3a9f5;"></div>
<div class="abs mono code" style="left:474.24px;top:462.25px"><span style="color:#e3dfe8">},</span></div>
<div class="abs" style="left:388px;top:499.4px;width:6.2px;height:2px;background:#c3a9f5;"></div>
<div class="abs mono code" style="left:474.24px;top:486.98px"><span style="color:#e3dfe8">{</span></div>
<div class="abs" style="left:388px;top:524.1px;width:6.2px;height:2px;background:#c3a9f5;"></div>
<div class="abs mono code" style="left:516.88px;top:511.71px"><span style="color:#f08d49">"id"</span><span style="color:#e3dfe8">: </span><span style="color:#f08d49">"0199c616-f254-74b7-958b-2555db9f6e7d"</span><span style="color:#e3dfe8">,</span></div>
<div class="abs" style="left:388px;top:548.8px;width:6.2px;height:2px;background:#c3a9f5;"></div>
<div class="abs mono code" style="left:516.88px;top:536.44px"><span style="color:#f08d49">"email"</span><span style="color:#e3dfe8">: </span><span style="color:#f08d49">"erm@erm.at"</span><span style="color:#e3dfe8">,</span></div>
<div class="abs" style="left:388px;top:573.6px;width:6.2px;height:2px;background:#c3a9f5;"></div>
<div class="abs mono code" style="left:516.88px;top:561.17px"><span style="color:#f08d49">"username"</span><span style="color:#e3dfe8">: </span><span style="color:#f08d49">"erm"</span><span style="color:#e3dfe8">,</span></div>
<div class="abs" style="left:388px;top:598.3px;width:6.2px;height:2px;background:#c3a9f5;"></div>
<div class="abs mono code" style="left:516.88px;top:585.9px"><span style="color:#f08d49">"role"</span><span style="color:#e3dfe8">: </span><span style="color:#f08d49">"user"</span></div>
<div class="abs" style="left:388px;top:623px;width:6.2px;height:2px;background:#c3a9f5;"></div>
<div class="abs mono code" style="left:474.24px;top:610.63px"><span style="color:#e3dfe8">}</span></div>
<div class="abs" style="left:388px;top:647.8px;width:6.2px;height:2px;background:#c3a9f5;"></div>
<div class="abs" style="left:433px;top:635px;width:11px;height:26.2px;background:#47434f;border-bottom:1.2px solid #cfc9d6"></div>
<div class="abs mono code" style="left:431.6px;top:635.36px"><span style="color:#e3dfe8">]</span></div>
<div class="abs" style="left:428.9px;top:339.4px;width:2.1px;height:295.4px;background:#85808c;"></div>
<div class="abs" style="left:433px;top:339.2px;width:10.8px;height:1.2px;background:#aaa5b1;"></div>
<div class="abs" style="left:471px;top:364.2px;width:1.8px;height:97.8px;background:#5a5168;"></div>
<div class="abs" style="left:471px;top:512.1px;width:1.8px;height:97.8px;background:#5a5168;"></div>
<div class="abs" style="left:1.8px;top:1347px;width:1121.2px;height:29px;background:#27242b;"></div>
<div class="abs" style="left:0px;top:1345.8px;width:336px;height:1.3px;background:#4d4659;"></div>
<div class="abs" style="left:336px;top:1347.2px;width:787px;height:1.3px;background:#4d4659;"></div>
<div class="abs" style="left:335.9px;top:1347px;width:1.2px;height:29px;background:#5a5168;"></div>
<div class="lb" style="left: 16.5px; top: 1357.2px; color: rgb(218, 213, 224); font-size: 17.2px; letter-spacing: 0.41px;">12 requests</div>
<div class="abs" style="left:127.45px;top:1355px;width:1.7px;height:21px;background:#5a5168;"></div>
<div class="lb" style="left: 143.7px; top: 1357.2px; color: rgb(218, 213, 224); font-size: 17.2px; letter-spacing: 0.64px;">3.7 kB transferred</div>
<div class="abs" style="left:309.65px;top:1355px;width:1.7px;height:21px;background:#5a5168;"></div>
<div class="lb" style="left:325.5px;top:1357.2px;color:#dad5e0;font-size:17.2px;width:10px;overflow:hidden">5</div>
<div class="lb mono" style="left:349px;top:1354.5px;color:#c3a9f5;font-size:21px;font-weight:bold;letter-spacing:2px">{}</div>
<div class="lb" style="left: 393px; top: 1357.2px; color: rgb(218, 213, 224); font-size: 17.2px; letter-spacing: 0.6px;">Line 1, Column 208</div>
</div>


</body></html>
